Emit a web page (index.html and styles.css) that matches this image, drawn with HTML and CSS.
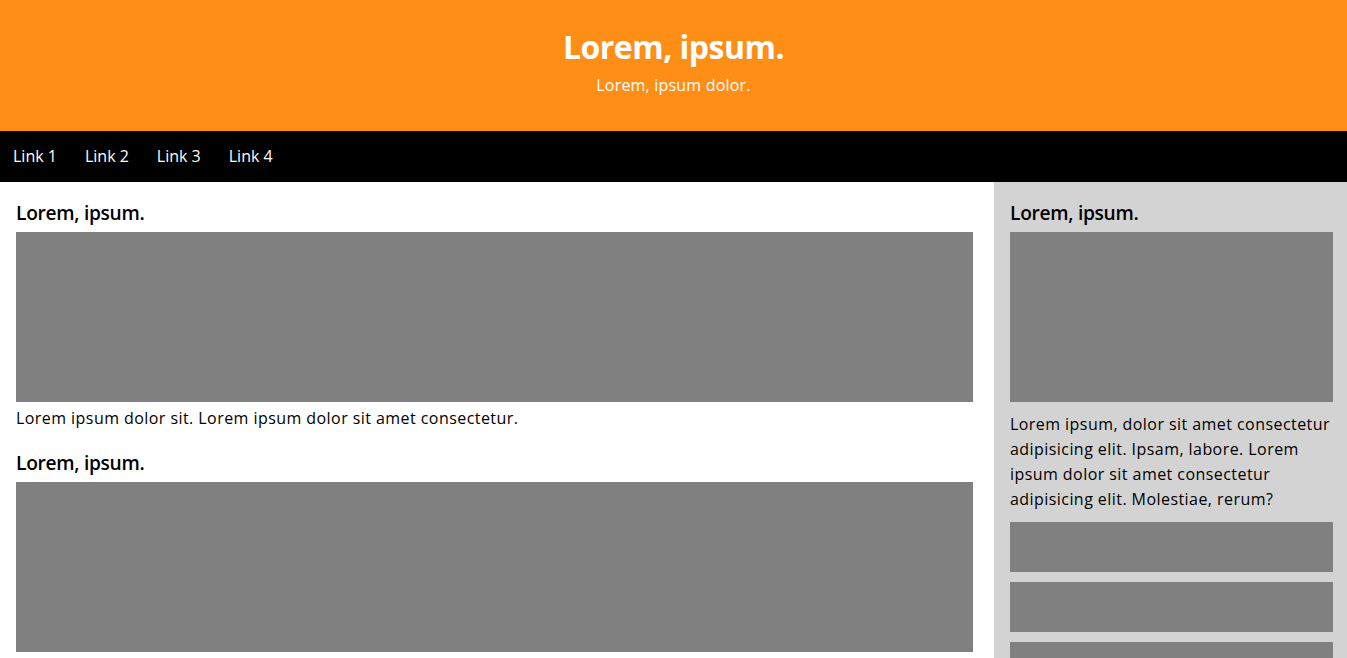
FILE: index.html
```html
<!DOCTYPE html>
<html lang="en">
<head>
<meta charset="utf-8">
<title>Lorem, ipsum.</title>
<link rel="stylesheet" href="styles.css">
</head>
<body>
<header class="site-header">
  <h1 class="site-title">Lorem, ipsum.</h1>
  <p class="site-subtitle">Lorem, ipsum dolor.</p>
</header>
<nav class="site-nav">
  <a href="#" class="nav-link">Link 1</a>
  <a href="#" class="nav-link">Link 2</a>
  <a href="#" class="nav-link">Link 3</a>
  <a href="#" class="nav-link">Link 4</a>
</nav>
<main class="layout">
  <section class="content">
    <article class="card">
      <h2 class="card-title">Lorem, ipsum.</h2>
      <div class="placeholder placeholder-lg"></div>
      <p class="card-text">Lorem ipsum dolor sit. Lorem ipsum dolor sit amet consectetur.</p>
    </article>
    <article class="card">
      <h2 class="card-title">Lorem, ipsum.</h2>
      <div class="placeholder placeholder-lg"></div>
      <p class="card-text">Lorem ipsum dolor sit. Lorem ipsum dolor sit amet consectetur.</p>
    </article>
  </section>
  <aside class="sidebar">
    <h2 class="card-title">Lorem, ipsum.</h2>
    <div class="placeholder placeholder-lg"></div>
    <p class="sidebar-text">Lorem ipsum, dolor sit amet consectetur adipisicing elit. Ipsam, labore. Lorem ipsum dolor sit amet consectetur adipisicing elit. Molestiae, rerum?</p>
    <div class="sidebar-blocks">
      <div class="placeholder placeholder-sm"></div>
      <div class="placeholder placeholder-sm"></div>
      <div class="placeholder placeholder-sm"></div>
    </div>
  </aside>
</main>
</body>
</html>
```
FILE: styles.css
```css
* { box-sizing: border-box; }

html, body {
  margin: 0;
  padding: 0;
}

body {
  font-family: "Open Sans", "Liberation Sans", sans-serif;
  color: #000;
  background: #fff;
  font-size: 16px;
}

.site-header {
  background: #ff8e17;
  color: #fff;
  text-align: center;
  padding: 25px 0 34px;
}

.site-title {
  margin: 0;
  font-size: 32px;
  line-height: 44px;
  font-weight: 700;
  letter-spacing: -0.5px;
}

.site-subtitle {
  margin: 4px 0 0;
  font-size: 16px;
  line-height: 24px;
  letter-spacing: 0.2px;
}

.site-nav {
  background: #000;
  display: flex;
  gap: 28px;
  padding: 13px 13px 14px;
}

.nav-link {
  color: #fff;
  text-decoration: none;
  font-size: 16px;
  line-height: 24px;
}

.layout {
  display: grid;
  grid-template-columns: 1fr 353px;
}

.content {
  padding: 18px 21px 0 16px;
}

.card + .card {
  margin-top: 20px;
}

.card-title {
  margin: 0 0 6px;
  font-size: 19.2px;
  line-height: 26px;
  font-weight: 600;
  letter-spacing: -0.3px;
}

.placeholder {
  background: #808080;
}

.placeholder-lg {
  height: 170px;
}

.placeholder-sm {
  height: 50px;
}

.card-text {
  margin: 4px 0 0;
  line-height: 24px;
  letter-spacing: 0.44px;
}

.sidebar {
  background: #d3d3d3;
  padding: 18px 14px 0 16px;
}

.sidebar-text {
  margin: 10px 0 0;
  line-height: 25px;
  letter-spacing: 0.44px;
}

.sidebar-blocks {
  margin-top: 10px;
  display: flex;
  flex-direction: column;
  gap: 10px;
}
```
